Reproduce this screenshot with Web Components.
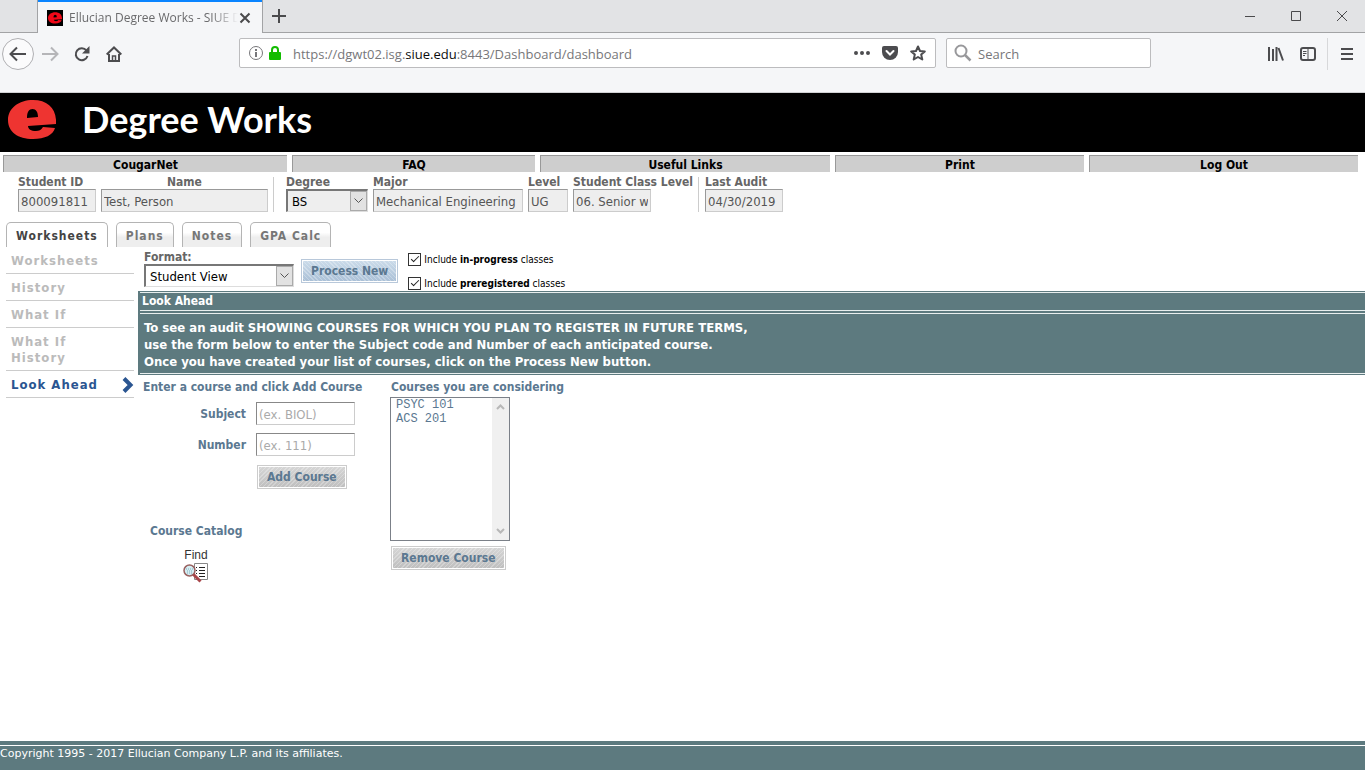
<!DOCTYPE html>
<html lang="en">
<head>
<meta charset="utf-8">
<title>Ellucian Degree Works</title>
<style>
html, body {
    margin: 0;
    height: 100%;
}
body {
    display: flex;
    flex-direction: column;
    min-height: 100vh;
    background: #fff;
    font-family: "DejaVu Sans Condensed", "DejaVu Sans", Tahoma, sans-serif;
    font-size: 12px;
    color: #000;
}
main {
    flex: 1;
    display: flex;
    gap: 4px;
    align-items: flex-start;
}
dw-workspace {
    flex: 1;
}
</style>
</head>
<body>
<browser-tabs>Ellucian Degree Works - SIUE Degree Works</browser-tabs>
<browser-toolbar></browser-toolbar>
<dw-masthead>Degree Works</dw-masthead>
<dw-menu>
    <a href="#cougarnet">CougarNet</a>
    <a href="#faq">FAQ</a>
    <a href="#links">Useful Links</a>
    <a href="#print">Print</a>
    <a href="#logout">Log Out</a>
</dw-menu>
<dw-student></dw-student>
<dw-tabs>
    <a href="#worksheets" class="active">Worksheets</a>
    <a href="#plans">Plans</a>
    <a href="#notes">Notes</a>
    <a href="#gpa">GPA Calc</a>
</dw-tabs>
<main>
    <dw-sidebar>
        <dw-side-item>Worksheets</dw-side-item>
        <dw-side-item>History</dw-side-item>
        <dw-side-item>What If</dw-side-item>
        <dw-side-item>What If History</dw-side-item>
        <dw-side-item active>Look Ahead</dw-side-item>
    </dw-sidebar>
    <dw-workspace>
        <dw-format-bar></dw-format-bar>
        <dw-panel>
            <span slot="title">Look Ahead</span>
            To see an audit SHOWING COURSES FOR WHICH YOU PLAN TO REGISTER IN FUTURE TERMS,<br>
            use the form below to enter the Subject code and Number of each anticipated course.<br>
            Once you have created your list of courses, click on the Process New button.
        </dw-panel>
        <dw-look-ahead></dw-look-ahead>
    </dw-workspace>
</main>
<dw-footer>Copyright 1995 - 2017 Ellucian Company L.P. and its affiliates.</dw-footer>

<script>
// the red "e" mark, used in the tab and in the masthead
const mark = `<svg class="mark" viewBox="0 0 48 40" aria-hidden="true">
    <path fill="currentColor" fill-rule="evenodd" d="M25 0C11 0 0 8 0 20s10 19 25 19c12 0 20-4 22-11l-12-1c-2 3-4 4-7 4-5 0-8-2-8-5l28-2C49 9 40 0 25 0zM19 18c0-6 2-9 5.500-9s5.500 3 5.500 8z"/>
</svg>`;

class BrowserTabs extends HTMLElement {
    constructor() {
        super();
        this.attachShadow({ mode: 'open' });
        this.shadowRoot.innerHTML = `
        <style>
        :host {
            display: flex;
            flex: none;
            height: 32px;
            padding-left: 37px;
            background: #e2e3e5;
            box-shadow: inset 0 -1px #a2a3a5;
            padding-bottom: 1px;
            font-family: "Noto Sans", "Open Sans", sans-serif;
            font-size: 12px;
            color: #6a6a6c;
        }
        .tab {
            display: flex;
            align-items: center;
            width: 226px;
            height: 33px;
            box-sizing: border-box;
            padding: 2px 10px 0 9px;
            border: solid #a2a3a5;
            border-width: 0 1px;
            background: #f5f6f8;
            box-shadow: inset 0 2px #0a84ff;
        }
        .icon {
            display: flex;
            align-items: center;
            justify-content: center;
            width: 16px;
            height: 16px;
            margin-right: 6px;
            background: #000;
            color: #f00818;
        }
        .mark { width: 14px; height: 12px; }
        .title {
            flex: 1;
            overflow: hidden;
            white-space: nowrap;
            font-family: "Open Sans", sans-serif;
            -webkit-mask-image: linear-gradient(90deg, #000 84%, transparent);
            mask-image: linear-gradient(90deg, #000 84%, transparent);
        }
        button {
            display: flex;
            align-items: center;
            justify-content: center;
            padding: 0;
            border: 0;
            background: none;
            color: #4a4a4c;
        }
        svg { fill: none; stroke: currentColor; }
        .mark { fill: currentColor; stroke: none; }
        .new { width: 32px; }
        .window {
            display: flex;
            flex: 1;
            justify-content: flex-end;
        }
        .window button { width: 46px; }
        </style>
        <div class="tab">
            <span class="icon">${mark}</span>
            <span class="title"><slot></slot></span>
            <button aria-label="Close tab"><svg width="14" height="14" stroke-width="2"><path d="M2.500 2.500l9 9M11.500 2.500l-9 9"/></svg></button>
        </div>
        <button class="new" aria-label="New tab"><svg width="14" height="14" stroke-width="2"><path d="M7 0v14M0 7h14"/></svg></button>
        <div class="window">
            <button aria-label="Minimize"><svg width="10" height="10"><path d="M0 5.500h10"/></svg></button>
            <button aria-label="Maximize"><svg width="10" height="10"><path d="M.5.500h9v9h-9z"/></svg></button>
            <button aria-label="Close"><svg width="10" height="10"><path d="M0 0l10 10M10 0L0 10"/></svg></button>
        </div>
        `;
    }
}
customElements.define('browser-tabs', BrowserTabs);

class BrowserToolbar extends HTMLElement {
    constructor() {
        super();
        this.attachShadow({ mode: 'open' });
        this.shadowRoot.innerHTML = `
        <style>
        :host {
            display: flex;
            flex: none;
            align-items: flex-start;
            height: 54px;
            padding: 5px 0 0 2px;
            background: #f5f6f8;
            border-bottom: 1px solid #d0d1d3;
            font-family: "Open Sans", sans-serif;
            font-size: 13px;
            color: #77777a;
        }
        svg { display: block; fill: none; stroke: currentColor; stroke-width: 2; }
        button {
            display: flex;
            align-items: center;
            justify-content: center;
            width: 32px;
            height: 32px;
            padding: 0;
            border: 0;
            background: none;
            color: #4c4c4f;
        }
        .back {
            border: 1px solid #b0b0b3;
            border-radius: 50%;
            background: #fbfbfc;
        }
        .forward { color: #b5b5b8; }
        .box {
            display: flex;
            align-items: center;
            box-sizing: border-box;
            height: 30px;
            border: 1px solid #bcbcbe;
            border-radius: 2px;
            background: #fff;
        }
        .location {
            flex: 686;
            margin-left: 109px;
            padding: 0 0 0 9px;
            gap: 6px;
        }
        .url {
            flex: 1;
            margin-left: 6px;
            padding-top: 2px;
            outline: 0;
            white-space: nowrap;
        }
        .url b { font-weight: normal; color: #0c0c0d; }
        .location button { width: 22px; height: 28px; }
        .search {
            flex: 196;
            margin-left: 10px;
            padding-left: 7px;
            gap: 6px;
        }
        input {
            flex: 1;
            width: 0;
            padding: 2px 0 0;
            border: 0;
            outline: 0;
            background: none;
            font: inherit;
            color: inherit;
        }
        input::placeholder { color: #77777a; opacity: 1; }
        .tools {
            display: flex;
            flex: 214;
            justify-content: flex-end;
        }
        .menu {
            width: 38px;
            border-left: 1px solid #d7d8da;
        }
        </style>
        <button class="back" aria-label="Back"><svg width="18" height="16"><path d="M17 8H2M8 1.500L1.500 8l6.500 6.500"/></svg></button>
        <button class="forward" aria-label="Forward"><svg width="18" height="16"><path d="M1 8h15M10 1.500l6.500 6.500-6.500 6.500"/></svg></button>
        <button aria-label="Reload"><svg width="16" height="16"><path d="M13.500 10A6 6 0 1 1 12.500 4.500"/><path fill="currentColor" stroke="none" d="M15.500 0v7.500H8z"/></svg></button>
        <button aria-label="Home"><svg width="16" height="16"><path d="M.7 8.500L8 1.500l7.300 7M3 8v7h10V8"/><path stroke-width="1.500" d="M6.500 15v-5h3v5"/></svg></button>
        <div class="box location">
            <svg width="14" height="14" style="stroke-width:1"><circle cx="7" cy="7" r="6.500"/><path style="stroke-width:2" d="M7 6v5M7 3v2"/></svg>
            <svg width="12" height="14" style="color:#12bc00"><rect x="0" y="6" width="12" height="8" rx="1" fill="currentColor" stroke="none"/><path d="M3 7V4a3 3 0 0 1 6 0v3"/></svg>
            <div class="url" role="textbox" aria-label="Address" contenteditable="true" spellcheck="false">https://dgwt02.isg.<b>siue.edu</b>:8443/Dashboard/dashboard</div>
            <button aria-label="Page actions"><svg width="16" height="4"><path fill="currentColor" stroke="none" d="M0 2a2 2 0 0 1 4 0 2 2 0 0 1-4 0m6 0a2 2 0 0 1 4 0 2 2 0 0 1-4 0m6 0a2 2 0 0 1 4 0 2 2 0 0 1-4 0"/></svg></button>
            <button aria-label="Save to Pocket"><svg width="16" height="14"><path fill="currentColor" stroke="none" d="M2 0h12q2 0 2 2v4a8 8 0 0 1-16 0V2q0-2 2-2z"/><path stroke="#fff" stroke-linecap="round" d="M4.500 5L8 8.500 11.500 5"/></svg></button>
            <button aria-label="Bookmark"><svg width="16" height="16"><path stroke-linejoin="round" d="M8 1.500l2 4.500 4.800.4-3.600 3.200 1.100 4.900L8 12l-4.300 2.500 1.100-4.900L1.200 6.400 6 6z"/></svg></button>
            <span></span>
        </div>
        <div class="box search">
            <svg width="18" height="18" style="color:#98989b"><circle cx="7" cy="7" r="5.500"/><path style="stroke-width:2.500" d="M11 11l5.500 5.500"/></svg>
            <input type="text" placeholder="Search" aria-label="Search">
        </div>
        <div class="tools">
            <button aria-label="Library"><svg width="16" height="14"><path d="M1 0v14M5 2v12M8.500 0v14M10.500 1l4.500 12.500"/></svg></button>
            <button aria-label="Sidebars"><svg width="16" height="14"><rect x="1" y="1" width="14" height="12" rx="2"/><path style="stroke-width:1" d="M8 1v12M3 4.500h3.500M3 6.500h3.500M3 8.500h2"/></svg></button>
            <span style="width:3px"></span>
            <button class="menu" aria-label="Menu"><svg width="12" height="12"><path d="M0 1h12M0 6h12M0 11h12"/></svg></button>
        </div>
        `;
    }
}
customElements.define('browser-toolbar', BrowserToolbar);

class DwMasthead extends HTMLElement {
    constructor() {
        super();
        this.attachShadow({ mode: 'open' });
        this.shadowRoot.innerHTML = `
        <style>
        :host {
            display: flex;
            flex: none;
            align-items: center;
            gap: 26px;
            height: 59px;
            padding-left: 8px;
            background: #000;
            color: #fff;
        }
        .mark { width: 48px; height: 40px; margin-bottom: 6px; color: #ee3431; }
        h1 {
            margin: 0 0 8px;
            font: bold 36px/44px Lato, sans-serif;
        }
        </style>
        ${mark}
        <h1><slot></slot></h1>
        `;
    }
}
customElements.define('dw-masthead', DwMasthead);

class DwMenu extends HTMLElement {
    constructor() {
        super();
        this.attachShadow({ mode: 'open' });
        this.shadowRoot.innerHTML = `
        <style>
        :host {
            display: block;
            flex: none;
            padding: 3px 7px 0 3px;
        }
        nav {
            display: grid;
            grid-template-columns: 284fr 243fr 290fr 249fr 269fr;
            gap: 5px;
        }
        ::slotted(a) {
            padding-top: 2px;
            border: solid #999;
            border-width: 1px 0 0 1px;
            background: #cecece;
            color: #000;
            font-weight: bold;
            line-height: 14px;
            text-align: center;
            text-decoration: none;
        }
        </style>
        <nav><slot></slot></nav>
        `;
    }
}
customElements.define('dw-menu', DwMenu);

// read-only value with its caption above: label, value, width, center
class DwField extends HTMLElement {
    constructor() {
        super();
        this.attachShadow({ mode: 'open' });
    }
    connectedCallback() {
        this.shadowRoot.innerHTML = `
        <style>
        :host { display: block; }
        label {
            display: block;
            padding-top: 2px;
            color: #666;
            font-weight: bold;
            line-height: 13px;
            white-space: nowrap;
            text-align: ${this.hasAttribute('center') ? 'center' : 'left'};
        }
        input {
            display: block;
            box-sizing: border-box;
            width: ${this.getAttribute('width')}px;
            height: 23px;
            padding: 2px 2px 0;
            border: 1px solid #ccc;
            border-top-color: #999;
            border-left-color: #999;
            border-radius: 0;
            background: #eee;
            color: #555;
            font: inherit;
            font-size: 13px;
        }
        </style>
        <label for="f">${this.getAttribute('label')}</label>
        <input id="f" type="text" readonly value="${this.getAttribute('value')}">
        `;
    }
}
customElements.define('dw-field', DwField);

class DwSelect extends HTMLElement {
    constructor() {
        super();
        this.attachShadow({ mode: 'open' });
    }
    connectedCallback() {
        this.shadowRoot.innerHTML = `
        <style>
        :host { display: block; }
        label {
            display: block;
            padding-top: 2px;
            color: #666;
            font-weight: bold;
            line-height: 13px;
        }
        .box {
            display: flex;
            box-sizing: border-box;
            width: ${this.getAttribute('width')}px;
            height: 23px;
            border: solid #777;
            border-width: 2px 1px 1px 2px;
            border-right-color: #ddd;
            border-bottom-color: #ddd;
            background: ${this.getAttribute('fill') || '#fff'};
        }
        select {
            flex: 1;
            min-width: 0;
            padding: 1px 4px 0;
            border: 0;
            border-radius: 0;
            outline: 0;
            appearance: none;
            background: none;
            color: #000;
            font: inherit;
            font-size: 13px;
        }
        .arrow {
            display: flex;
            align-items: center;
            justify-content: center;
            width: 15px;
            border: 1px solid #aaa;
            background: #e2e2e2;
        }
        </style>
        <label for="s">${this.getAttribute('label')}</label>
        <div class="box">
            <select id="s"><option>${this.getAttribute('value')}</option></select>
            <span class="arrow"><svg width="9" height="6" fill="none" stroke="#555"><path d="M.5.500l4 4 4-4"/></svg></span>
        </div>
        `;
    }
}
customElements.define('dw-select', DwSelect);

class DwStudent extends HTMLElement {
    constructor() {
        super();
        this.attachShadow({ mode: 'open' });
        this.shadowRoot.innerHTML = `
        <style>
        :host {
            display: flex;
            flex: none;
            gap: 5px;
            padding: 2px 18px 10px;
        }
        .rule {
            width: 1px;
            margin-top: 3px;
            background: #ccc;
        }
        .wide { margin-left: 7px; }
        .last { margin-left: 1px; }
        </style>
        <dw-field label="Student ID" value="800091811" width="78"></dw-field>
        <dw-field label="Name" value="Test, Person" width="167" center></dw-field>
        <span class="rule"></span>
        <dw-select class="wide" label="Degree" value="BS" width="82" fill="#eee"></dw-select>
        <dw-field label="Major" value="Mechanical Engineering (" width="150"></dw-field>
        <dw-field label="Level" value="UG" width="40"></dw-field>
        <dw-field label="Student Class Level" value="06. Senior w" width="78"></dw-field>
        <span class="rule"></span>
        <dw-field class="last" label="Last Audit" value="04/30/2019" width="78"></dw-field>
        `;
    }
}
customElements.define('dw-student', DwStudent);

class DwTabs extends HTMLElement {
    constructor() {
        super();
        this.attachShadow({ mode: 'open' });
        this.shadowRoot.innerHTML = `
        <style>
        :host {
            display: flex;
            flex: none;
            gap: 8px;
            padding-left: 6px;
        }
        ::slotted(a) {
            padding: 2px 9px 0;
            border: 1px solid #b4b4b4;
            border-bottom: 0;
            border-radius: 5px 5px 0 0;
            background: linear-gradient(#fff 40%, #eee 60%);
            color: #777;
            font-size: 12px;
            font-weight: bold;
            letter-spacing: 1px;
            line-height: 22px;
            text-decoration: none;
        }
        ::slotted(a.active) {
            background: #fff;
            color: #444;
        }
        </style>
        <slot></slot>
        `;
    }
}
customElements.define('dw-tabs', DwTabs);

class DwSidebar extends HTMLElement {
    constructor() {
        super();
        this.attachShadow({ mode: 'open' });
        this.shadowRoot.innerHTML = `
        <style>
        :host {
            display: block;
            flex: none;
            width: 128px;
            padding-left: 6px;
        }
        </style>
        <nav><slot></slot></nav>
        `;
    }
}
customElements.define('dw-sidebar', DwSidebar);

class DwSideItem extends HTMLElement {
    constructor() {
        super();
        this.attachShadow({ mode: 'open' });
        this.shadowRoot.innerHTML = `
        <style>
        :host {
            display: block;
            border-bottom: 1px solid #ccc;
        }
        a {
            display: flex;
            align-items: center;
            justify-content: space-between;
            padding: 6px 0 4px 5px;
            color: #bbb;
            font-size: 13px;
            font-weight: bold;
            letter-spacing: 1px;
            line-height: 16px;
            text-decoration: none;
        }
        span { max-width: 90px; }
        svg { display: none; }
        :host([active]) a { color: #2a5591; }
        :host([active]) svg { display: block; }
        </style>
        <a href="#"><span><slot></slot></span><svg width="12" height="16" fill="none" stroke="#2a5591" stroke-width="4"><path d="M2 1.500L8.500 8 2 14.500"/></svg></a>
        `;
    }
}
customElements.define('dw-side-item', DwSideItem);

class DwWorkspace extends HTMLElement {
    constructor() {
        super();
        this.attachShadow({ mode: 'open' });
        this.shadowRoot.innerHTML = `
        <style>
        :host { display: block; min-width: 0; }
        </style>
        <slot></slot>
        `;
    }
}
customElements.define('dw-workspace', DwWorkspace);

class DwButton extends HTMLElement {
    constructor() {
        super();
        this.attachShadow({ mode: 'open' });
        this.shadowRoot.innerHTML = `
        <style>
        :host { display: block; }
        button {
            display: block;
            height: 24px;
            padding: 0 9px;
            border: 1px solid #ccc;
            border-radius: 0;
            box-shadow: inset 0 0 0 1px #fff;
            background: repeating-linear-gradient(135deg, #ffffff44 0 1px, transparent 1px 3px), linear-gradient(#d6d6d6, #bebebe);
            color: #5b7891;
            font: inherit;
            font-size: 12px;
            font-weight: bold;
            white-space: nowrap;
        }
        :host([primary]) button {
            border-color: #b8c8da;
            background: repeating-linear-gradient(45deg, #ffffff44 0 1px, transparent 1px 3px), linear-gradient(#ccdcea, #a9bfd6);
        }
        </style>
        <button type="button"><slot></slot></button>
        `;
    }
}
customElements.define('dw-button', DwButton);

class DwFormatBar extends HTMLElement {
    constructor() {
        super();
        this.attachShadow({ mode: 'open' });
        this.shadowRoot.innerHTML = `
        <style>
        :host {
            display: flex;
            box-sizing: border-box;
            gap: 7px;
            height: 44px;
            padding: 2px 6px 0;
        }
        dw-button { padding-top: 10px; }
        .checks {
            display: flex;
            flex-direction: column;
            gap: 8px;
            padding: 2px 0 0 3px;
            font-size: 10px;
        }
        label {
            display: flex;
            align-items: center;
            gap: 3px;
            height: 16px;
            white-space: nowrap;
        }
        label span { padding-top: 1px; }
        input {
            display: grid;
            place-content: center;
            box-sizing: border-box;
            width: 13px;
            height: 13px;
            margin: 0;
            border: 1px solid #333;
            appearance: none;
            background: #fff;
        }
        /* tick is the lower left corner of a turned box */
        input:checked::before {
            content: "";
            width: 7px;
            height: 3px;
            margin-bottom: 3px;
            border: solid #222;
            border-width: 0 0 1px 1px;
            transform: rotate(-45deg);
        }
        </style>
        <dw-select label="Format:" value="Student View" width="150"></dw-select>
        <dw-button primary>Process New</dw-button>
        <div class="checks">
            <label><input type="checkbox" checked><span>Include <b>in-progress</b> classes</span></label>
            <label><input type="checkbox" checked><span>Include <b>preregistered</b> classes</span></label>
        </div>
        `;
    }
}
customElements.define('dw-format-bar', DwFormatBar);

class DwPanel extends HTMLElement {
    constructor() {
        super();
        this.attachShadow({ mode: 'open' });
        this.shadowRoot.innerHTML = `
        <style>
        :host {
            display: block;
            padding: 1px 0 1px 2px;
            background: #5d7a7f;
            color: #fff;
            font-weight: bold;
        }
        h2 {
            margin: 0 0 2px;
            padding: 0 2px;
            border: solid #e8eeee;
            border-width: 1px 0;
            font-size: 12px;
            line-height: 17px;
        }
        p {
            margin: 0;
            padding: 5px 4px 3px;
            border: solid #e8eeee;
            border-width: 1px 0;
            font-size: 13px;
            line-height: 17px;
        }
        </style>
        <h2><slot name="title"></slot></h2>
        <p><slot></slot></p>
        `;
    }
}
customElements.define('dw-panel', DwPanel);

class DwLookAhead extends HTMLElement {
    constructor() {
        super();
        this.attachShadow({ mode: 'open' });
        this.shadowRoot.innerHTML = `
        <style>
        :host {
            display: flex;
            gap: 28px;
            padding: 4px 5px;
            color: #5b7891;
            font-weight: bold;
        }
        h3, .heading {
            display: block;
            margin: 0;
            font-size: 12px;
            line-height: 16px;
            white-space: nowrap;
        }
        .entry { width: 219px; }
        .form {
            display: grid;
            grid-template-columns: 103px 99px;
            gap: 8px 10px;
            padding-top: 7px;
        }
        .form label {
            align-self: center;
            text-align: right;
        }
        input {
            box-sizing: border-box;
            width: 99px;
            height: 23px;
            padding: 2px 2px 0;
            border: 1px solid #ccc;
            border-top-color: #888;
            border-left-color: #888;
            background: #fff;
            font: inherit;
            font-size: 13px;
            font-weight: normal;
        }
        input::placeholder { color: #aaa; opacity: 1; }
        .form dw-button {
            grid-column: 2;
            padding: 1px 0 0 1px;
        }
        .catalog {
            padding: 34px 0 0 7px;
        }
        .find {
            display: flex;
            flex-direction: column;
            align-items: center;
            gap: 1px;
            width: 26px;
            margin: 9px 0 0 33px;
            color: #333;
            font: 12px/14px "Liberation Sans", sans-serif;
            text-decoration: none;
        }
        .list {
            display: flex;
            box-sizing: border-box;
            width: 120px;
            height: 144px;
            margin: 2px 0 5px;
            border: 1px solid #7b8088;
        }
        .list select {
            flex: 1;
            min-width: 0;
            padding: 0 0 0 3px;
            border: 0;
            outline: 0;
            background: #fff;
            color: #5b7891;
            font: 12px/14px "Liberation Mono", monospace;
            overflow: hidden;
        }
        .list option {
            min-height: 14px;
            padding: 0 2px;
        }
        .bar {
            display: flex;
            flex-direction: column;
            align-items: center;
            justify-content: space-between;
            width: 17px;
            box-sizing: border-box;
            padding: 6px 0;
            background: #f0f0f0;
        }
        .considering dw-button, .heading { padding-left: 1px; }
        </style>
        <section class="entry">
            <h3>Enter a course and click Add Course</h3>
            <div class="form">
                <label for="subject">Subject</label>
                <input id="subject" type="text" placeholder="(ex. BIOL)">
                <label for="number">Number</label>
                <input id="number" type="text" placeholder="(ex. 111)">
                <dw-button>Add Course</dw-button>
            </div>
            <div class="catalog">
                <h3>Course Catalog</h3>
                <a class="find" href="#catalog">Find
                    <svg width="26" height="20" fill="none">
                        <path fill="#fff" stroke="#888" d="M11.500.500h13v16h-13z"/>
                        <path stroke="#222" d="M16 4.500h6M16 7.500h6M16 10.500h6M16 13.500h6"/>
                        <path stroke="#222" d="M13 4.500h1M13 7.500h1M13 10.500h1"/>
                        <circle cx="6.500" cy="7.500" r="5.500" fill="#d5edf2" stroke="#98605f" stroke-width="1.500"/>
                        <path stroke="#7fb0c0" stroke-dasharray="1 1" d="M3 6h7M4 8h6M4 10h5"/>
                        <path stroke="#a8464a" stroke-width="3" d="M10.500 11.500l7 7"/>
                    </svg>
                </a>
            </div>
        </section>
        <section class="considering">
            <label class="heading" for="courses">Courses you are considering</label>
            <div class="list">
                <select id="courses" size="10">
                    <option>PSYC 101</option>
                    <option>ACS 201</option>
                </select>
                <span class="bar">
                    <svg width="9" height="6" fill="none" stroke="#b8b8b8" stroke-width="2"><path d="M1 5l3.500-3.500L8 5"/></svg>
                    <svg width="9" height="6" fill="none" stroke="#b8b8b8" stroke-width="2"><path d="M1 1l3.500 3.500L8 1"/></svg>
                </span>
            </div>
            <dw-button>Remove Course</dw-button>
        </section>
        `;
    }
}
customElements.define('dw-look-ahead', DwLookAhead);

class DwFooter extends HTMLElement {
    constructor() {
        super();
        this.attachShadow({ mode: 'open' });
        this.shadowRoot.innerHTML = `
        <style>
        :host {
            display: block;
            flex: none;
            padding: 4px 0 8px;
            background: #5d7a7f;
            color: #fff;
            font: 11px/16px "DejaVu Sans", Verdana, sans-serif;
        }
        div { border-top: 1px solid #fff; }
        </style>
        <div><slot></slot></div>
        `;
    }
}
customElements.define('dw-footer', DwFooter);
</script>
</body>
</html>
